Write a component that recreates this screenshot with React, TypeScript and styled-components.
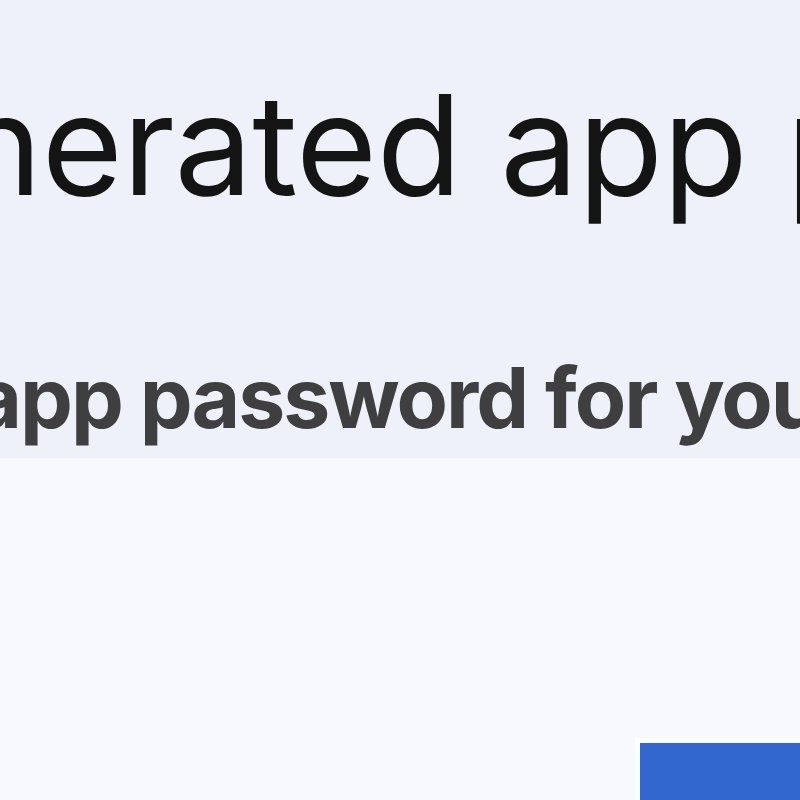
import styled, { createGlobalStyle } from 'styled-components'

const GlobalStyle = createGlobalStyle`
  html, body {
    margin: 0;
    padding: 0;
    background: #f7f9fd;
  }
  * { box-sizing: border-box; }
`

const Page = styled.div`
  width: 800px;
  height: 800px;
  overflow: hidden;
  display: flex;
  flex-direction: column;
  background: #f7f9fd;
  font-family: Inter, "Open Sans", sans-serif;
`

const Hero = styled.header`
  height: 458px;
  flex-shrink: 0;
  background: #eef1f9;
  display: flex;
  flex-direction: column;
  padding-top: 62px;
  overflow: hidden;
`

const Title = styled.h1<{ $shift: number }>`
  margin: 0 0 0 ${p => p.$shift}px;
  font-size: 139px;
  font-weight: 400;
  line-height: 1.2;
  color: #141414;
  white-space: nowrap;
  letter-spacing: -0.0025em;
`

const Subtitle = styled.p<{ $shift: number }>`
  margin: 119px 0 0 ${p => p.$shift}px;
  font-size: 84px;
  font-weight: 700;
  line-height: 1.2;
  color: #3f3f41;
  white-space: nowrap;
  letter-spacing: -0.024em;
`

const Body = styled.main`
  flex: 1;
  display: flex;
  justify-content: flex-end;
  padding: 283px 0 0 0;
  margin-right: -200px;
`

const PrimaryButton = styled.button`
  width: 362px;
  min-height: 200px;
  border: 2px solid #ffffff;
  border-radius: 0;
  background: #3167cf;
  color: #ffffff;
  font-family: inherit;
  font-size: 40px;
  font-weight: 600;
  box-shadow: 0 0 0 3px #fdfeff;
`

export default function App() {
  return (
    <>
      <GlobalStyle />
      <Page>
        <Hero>
          <Title $shift={-224}>Generated app password</Title>
          <Subtitle $shift={-360}>Use this app password for your account</Subtitle>
        </Hero>
        <Body>
          <PrimaryButton type="button">Done</PrimaryButton>
        </Body>
      </Page>
    </>
  )
}
